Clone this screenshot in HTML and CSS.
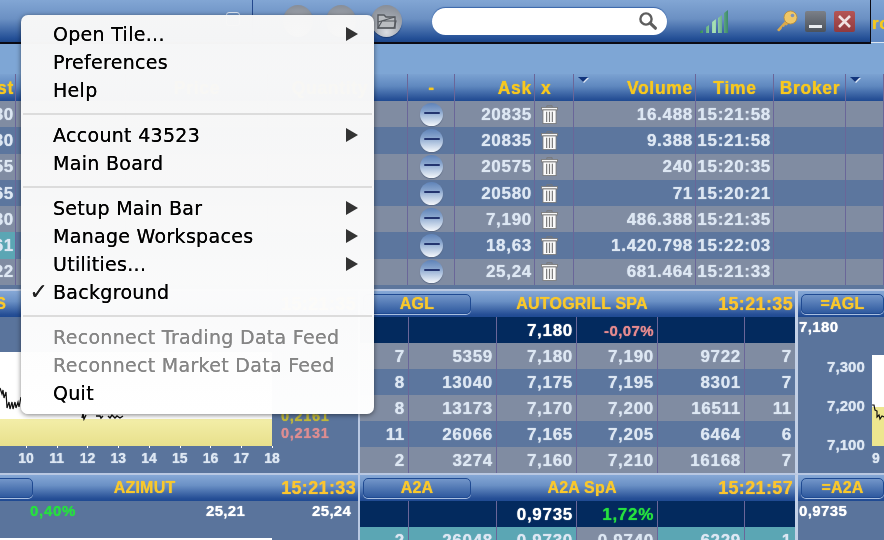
FILE: index.html
```html
<!DOCTYPE html>
<html lang="en">
<head>
<meta charset="utf-8">
<title>Trading board</title>
<link rel="stylesheet" href="styles.css">
</head>
<body>
<div class="app">
  <header class="top">
    <div class="bar">
      <div class="bar-left"><span class="peek"></span></div>
      <div class="bar-right">
        <span class="round"></span>
        <span class="round"></span>
        <span class="round round-last">
          <svg width="22" height="20" viewBox="0 0 22 20"><path d="M2 17V4h6l2 2h9v11z" fill="#b9bcc0" stroke="#55595f" stroke-width="1.4"/><path d="M2 11l17-5M2 17l4-7h14l-2 7z" fill="none" stroke="#55595f" stroke-width="1.2"/></svg>
        </span>
        <div class="search">
          <svg width="20" height="20" viewBox="0 0 20 20"><circle cx="8" cy="8" r="5.6" fill="none" stroke="#5e5e5e" stroke-width="2.4"/><path d="M12.2 12.2l5.2 5" stroke="#5e5e5e" stroke-width="3.2" stroke-linecap="round"/></svg>
        </div>
        <svg class="signal" width="28" height="23" viewBox="0 0 28 23">
          <defs><linearGradient id="sg" x1="0" x2="1" y1="0" y2="0"><stop offset="0" stop-color="#2f8a5a"/><stop offset=".5" stop-color="#a9e2b8"/><stop offset="1" stop-color="#3c8a6a"/></linearGradient></defs>
          <path d="M0 23v-2l3-1v3zM6 23v-6l3-2v8zM12 23V12l4-3v14zM18 23V8l4-3v18zM24 23V3l4-3v23z" fill="url(#sg)"/>
        </svg>
        <svg class="key" width="22" height="23" viewBox="0 0 22 23">
          <path d="M1 20l9-10 3 3-2.500 2.500-1.500-.5-1 2-1.500-.5-1 2.500-2.500 2.500z" fill="#d9a94c"/>
          <circle cx="14.500" cy="7.500" r="6.500" fill="#efc768" stroke="#b98a35" stroke-width=".8"/>
          <circle cx="16.500" cy="5.500" r="1.800" fill="#7f94b8"/>
        </svg>
        <span class="win win-min"><i></i></span>
        <span class="win win-close">
          <svg width="21" height="21" viewBox="0 0 21 21"><path d="M5 5l11 11M16 5L5 16" stroke="#f0e2e2" stroke-width="2.600"/></svg>
        </span>
      </div>
    </div>
    <div class="bar-next"><span>ro</span></div>
  </header>

  <div class="strip"></div>

  <section class="book">
    <div class="tr th">
      <div class="td r clip"><span>st</span></div>
      <div class="td c"></div>
      <div class="td c">Price</div>
      <div class="td c qty">Quantity</div>
      <div class="td c">-</div>
      <div class="td r">Ask</div>
      <div class="td l">x</div>
      <div class="td r sort">Volume</div>
      <div class="td c">Time</div>
      <div class="td c">Broker</div>
      <div class="td sort"></div>
    </div>
    <div class="tr gray">
      <div class="td r clip"><span>30</span></div><div class="td"></div><div class="td"></div><div class="td"></div>
      <div class="td c"><span class="minus"></span></div><div class="td r">20835</div>
      <div class="td l"><svg class="trash" viewBox="0 0 16 18"><use href="#bin"/></svg></div>
      <div class="td r">16.488</div><div class="td r">15:21:58</div><div class="td"></div><div class="td"></div>
    </div>
    <div class="tr blue">
      <div class="td r clip"><span>30</span></div><div class="td"></div><div class="td"></div><div class="td"></div>
      <div class="td c"><span class="minus"></span></div><div class="td r">20835</div>
      <div class="td l"><svg class="trash" viewBox="0 0 16 18"><use href="#bin"/></svg></div>
      <div class="td r">9.388</div><div class="td r">15:21:58</div><div class="td"></div><div class="td"></div>
    </div>
    <div class="tr gray">
      <div class="td r clip"><span>55</span></div><div class="td"></div><div class="td"></div><div class="td"></div>
      <div class="td c"><span class="minus"></span></div><div class="td r">20575</div>
      <div class="td l"><svg class="trash" viewBox="0 0 16 18"><use href="#bin"/></svg></div>
      <div class="td r">240</div><div class="td r">15:20:35</div><div class="td"></div><div class="td"></div>
    </div>
    <div class="tr blue">
      <div class="td r clip"><span>65</span></div><div class="td"></div><div class="td"></div><div class="td"></div>
      <div class="td c"><span class="minus"></span></div><div class="td r">20580</div>
      <div class="td l"><svg class="trash" viewBox="0 0 16 18"><use href="#bin"/></svg></div>
      <div class="td r">71</div><div class="td r">15:20:21</div><div class="td"></div><div class="td"></div>
    </div>
    <div class="tr gray">
      <div class="td r clip"><span>30</span></div><div class="td"></div><div class="td"></div><div class="td"></div>
      <div class="td c"><span class="minus"></span></div><div class="td r">7,190</div>
      <div class="td l"><svg class="trash" viewBox="0 0 16 18"><use href="#bin"/></svg></div>
      <div class="td r">486.388</div><div class="td r">15:21:35</div><div class="td"></div><div class="td"></div>
    </div>
    <div class="tr blue">
      <div class="td r clip teal"><span>61</span></div><div class="td"></div><div class="td"></div><div class="td"></div>
      <div class="td c"><span class="minus"></span></div><div class="td r">18,63</div>
      <div class="td l"><svg class="trash" viewBox="0 0 16 18"><use href="#bin"/></svg></div>
      <div class="td r">1.420.798</div><div class="td r">15:22:03</div><div class="td"></div><div class="td"></div>
    </div>
    <div class="tr gray">
      <div class="td r clip"><span>22</span></div><div class="td"></div><div class="td"></div><div class="td"></div>
      <div class="td c"><span class="minus"></span></div><div class="td r">25,24</div>
      <div class="td l"><svg class="trash" viewBox="0 0 16 18"><use href="#bin"/></svg></div>
      <div class="td r">681.464</div><div class="td r">15:21:33</div><div class="td"></div><div class="td"></div>
    </div>
  </section>

  <section class="boards">
    <!-- row 1 -->
    <article class="panel p-left">
      <div class="head">
        <span class="btn-clip">S</span>
        <span class="title"></span>
        <span class="time">15:21:35</span>
      </div>
      <div class="mini-top"></div>
      <div class="mini-chart">
        <svg class="plot" width="272" height="94" viewBox="0 0 272 94">
          <defs><linearGradient id="fa" x1="0" x2="0" y1="0" y2="1"><stop offset="0" stop-color="#f3eea8"/><stop offset="1" stop-color="#e8e08c"/></linearGradient></defs>
          <rect width="272" height="94" fill="#fff"/>
          <rect y="67" width="272" height="27" fill="url(#fa)"/>
          <path d="M0 36l2 6 1-4 1 8 2-6 1 16 2-6 1 7 2-7 1 7 2-7 1 6 2-6 1 5 2-10" fill="none" stroke="#111" stroke-width="1.200"/>
          <path d="M82 66l1-4 1 5 2-4M96 64h4l1 2 2-2M108 64l2 2 2-3 3 3 2-2 3 2 3-2" fill="none" stroke="#111" stroke-width="1.400"/>
        </svg>
        <div class="levels"><span class="lv-y">0,2161</span><span class="lv-r">0,2131</span></div>
      </div>
      <div class="hours"><span>10</span><span>11</span><span>12</span><span>13</span><span>14</span><span>15</span><span>16</span><span>17</span><span>18</span></div>
    </article>

    <article class="panel p-mid">
      <div class="head">
        <span class="btn">AGL</span>
        <span class="title">AUTOGRILL SPA</span>
        <span class="time">15:21:35</span>
      </div>
      <div class="q dark"><b></b><b></b><b class="w">7,180</b><b class="neg">-0,07%</b><b></b><b></b></div>
      <div class="q gray"><b>7</b><b>5359</b><b>7,180</b><b>7,190</b><b>9722</b><b>7</b></div>
      <div class="q blue"><b>8</b><b>13040</b><b>7,175</b><b>7,195</b><b>8301</b><b>7</b></div>
      <div class="q gray"><b>8</b><b>13173</b><b>7,170</b><b>7,200</b><b>16511</b><b>11</b></div>
      <div class="q blue"><b>11</b><b>26066</b><b>7,165</b><b>7,205</b><b>6464</b><b>6</b></div>
      <div class="q gray"><b>2</b><b>3274</b><b>7,160</b><b>7,210</b><b>16168</b><b>7</b></div>
    </article>

    <article class="panel p-side">
      <div class="head">
        <span class="btn btn-side">=AGL</span>
      </div>
      <div class="last">7,180</div>
      <div class="side-chart">
        <div class="scale"><span>7,300</span><span>7,200</span><span>7,100</span></div>
        <svg class="side-plot" width="12" height="91" viewBox="0 0 12 91">
          <rect width="12" height="91" fill="#fff"/>
          <rect y="52" width="12" height="39" fill="#ede68f"/>
          <path d="M0 50h2l1 5 2 1v6l2-2 1 4 2-3 2 1" fill="none" stroke="#111" stroke-width="1.200"/>
        </svg>
      </div>
      <div class="side-hour">9</div>
    </article>

    <!-- row 2 -->
    <article class="panel p-left">
      <div class="head">
        <span class="btn btn-left"></span>
        <span class="title">AZIMUT</span>
        <span class="time">15:21:33</span>
      </div>
      <div class="quote-line">
        <span class="pos">0,40%</span>
        <span class="val-a">25,21</span>
        <span class="val-b">25,24</span>
      </div>
      <div class="next-plot"></div>
    </article>

    <article class="panel p-mid">
      <div class="head">
        <span class="btn">A2A</span>
        <span class="title">A2A SpA</span>
        <span class="time">15:21:57</span>
      </div>
      <div class="q dark"><b></b><b></b><b class="w">0,9735</b><b class="up">1,72%</b><b></b><b></b></div>
      <div class="q tealrow"><b>2</b><b>26048</b><b>0,9730</b><b class="graycell">0,9740</b><b>6229</b><b>1</b></div>
    </article>

    <article class="panel p-side">
      <div class="head">
        <span class="btn btn-side">=A2A</span>
      </div>
      <div class="last">0,9735</div>
    </article>
  </section>

  <nav class="menu">
    <div class="item"><span></span><span>Open Tile...</span><i class="arrow"></i></div>
    <div class="item"><span></span><span>Preferences</span></div>
    <div class="item"><span></span><span>Help</span></div>
    <hr class="sep">
    <div class="item"><span></span><span>Account 43523</span><i class="arrow"></i></div>
    <div class="item"><span></span><span>Main Board</span></div>
    <hr class="sep">
    <div class="item"><span></span><span>Setup Main Bar</span><i class="arrow"></i></div>
    <div class="item"><span></span><span>Manage Workspaces</span><i class="arrow"></i></div>
    <div class="item"><span></span><span>Utilities...</span><i class="arrow"></i></div>
    <div class="item"><span class="check">✓</span><span>Background</span></div>
    <hr class="sep">
    <div class="item off"><span></span><span>Reconnect Trading Data Feed</span></div>
    <div class="item off"><span></span><span>Reconnect Market Data Feed</span></div>
    <div class="item"><span></span><span>Quit</span></div>
  </nav>
</div>

<svg class="defs" width="0" height="0">
  <symbol id="bin" viewBox="0 0 16 18">
    <path d="M5.500 2.500V.7h5v1.800" fill="none" stroke="#777" stroke-width=".9"/>
    <rect x=".5" y="2.300" width="15" height="2.400" fill="#f6f6f6" stroke="#777" stroke-width=".8"/>
    <rect x="1.800" y="4.700" width="12.400" height="12.900" fill="#fbfbfb" stroke="#777" stroke-width=".8"/>
    <path d="M5.300 6.500v9.500M8 6.500v9.500M10.700 6.500v9.500" stroke="#777" stroke-width="1.100"/>
  </symbol>
</svg>
</body>
</html>
```

FILE: styles.css
```css
* { box-sizing: border-box; }
html, body { margin: 0; padding: 0; }
body { width: 884px; height: 540px; overflow: hidden; background: #7ea6d5; }

.app {
  position: relative;
  width: 884px;
  height: 540px;
  overflow: hidden;
  font: bold 17px/1 "Liberation Sans", Arial, sans-serif;
  letter-spacing: .7px;
  color: #dde7f3;
  text-shadow: 0 0 1px currentColor;
  filter: blur(.35px);
}

/* top bar */
.top { display: flex; height: 44px; }
.bar {
  width: 871px;
  display: flex;
  background: linear-gradient(#82a6d4 0%, #6b90c3 45%, #234f96 92%, #1d4689 100%);
  border-right: 1px solid #0a0a14;
  border-bottom: 2px solid #0a0a14;
}
.bar-left { width: 253px; border-right: 1px solid #23488d; display: flex; justify-content: flex-end; padding: 12px 12px 0 0; }
.peek { width: 14px; height: 14px; border: 1px solid #dbe5f2; border-radius: 3px; }
.bar-right { flex: 1; display: flex; align-items: center; padding-left: 30px; }
.round {
  width: 30px; height: 32px; border-radius: 50%; margin-right: 13px;
  background: radial-gradient(circle at 50% 85%, #dadde2 0, #a4a9b1 45%, #7f858f 100%);
  box-shadow: 0 1px 1px rgba(10, 30, 70, .5);
  display: flex; align-items: center; justify-content: center;
}
.round-last { width: 31px; margin-right: 0; margin-left: 2px; }
.search {
  width: 235px; height: 27px; margin-left: 30px; border-radius: 14px;
  background: #fff; box-shadow: 0 -1px 1px #3a66aa;
  display: flex; align-items: center; justify-content: flex-end; padding-right: 9px;
}
.signal { margin-left: 33px; }
.key { margin-left: 48px; }
.win { width: 21px; height: 21px; margin-left: 7px; border-radius: 2px; display: block; }
.win-min { background: linear-gradient(#7b8088, #4b525c); padding: 14px 4px 0; }
.win-min i { display: block; height: 3px; background: #e9edf2; }
.win-close { background: linear-gradient(#b55555, #8f3a3f); margin-left: 8px; }
.bar-next {
  flex: 1; overflow: hidden; padding: 15px 0 0 1px; color: #f5c81e; font-size: 17px;
  background: linear-gradient(#7ea4d4, #5f88c2);
  border-bottom: 1px solid #dbe5f2; height: 43px;
}

.strip { height: 30px; background: #7ea6d5; }

/* order book */
.book { height: 215px; background: #5d769c; }
.tr { display: grid; grid-template-columns: 16px 110px 142px 140px 47px 80px 39px 122px 78px 72px 38px; height: 26.3px; }
.td {
  border-right: 1.5px solid #6a6699;
  display: flex; align-items: center;
  padding: 0 2px 0 3px;
  white-space: nowrap;
  overflow: hidden;
}
.td.r { justify-content: flex-end; }
.td.c { justify-content: center; }
.td.l { padding-left: 6px; }
.td.clip { padding: 0 1px 0 0; }
.td.clip span { flex: none; }
.teal { background: #5ba6b4; }
.gray { background: #808ca2; }
.blue { background: #5c769e; }
.th {
  height: 27px;
  font-size: 17.500px;
  color: #f7c81f;
  background: linear-gradient(#7ba2d2 0%, #5f88bf 45%, #2a5398 90%, #1f4a92 100%);
}
.th .td { padding-top: 2px; }
.th .qty { padding-right: 18px; }
.sort { position: relative; }
.sort::before {
  content: "";
  position: absolute; left: 4px; top: 3px;
  border-left: 5px solid transparent; border-right: 5px solid transparent;
  border-top: 5px solid #12357c;
  filter: drop-shadow(1px 1px 0 #dfe8f5);
}
.minus {
  width: 23px; height: 23px; border-radius: 50%; position: relative; display: block;
  background: linear-gradient(#5f83b8 0%, #86a3cc 35%, #b9cbe3 65%, #f4f7fb 100%);
  box-shadow: 0 1px 1px #5a6a85;
}
.minus::after {
  content: ""; position: absolute; left: 4px; right: 3px; top: 9px; height: 2px;
  background: #24356f; border-radius: 1px;
}
.trash { width: 17px; height: 19px; display: block; }
.defs { position: absolute; }

/* boards */
.boards { display: grid; grid-template-columns: 360px 438px 1fr; grid-template-rows: 184px 1fr; background: #b9c8e2; padding-top: 2px; height: 251px; }
.panel { background: #5a749c; overflow: hidden; }
.p-left { border-right: 2px solid #b9c8e2; }
.p-mid { border-right: 3px solid #c3d0e6; }
.panel:nth-child(-n+3) { border-bottom: 2px solid #b9c8e2; }
.head {
  height: 26px; display: flex; align-items: center;
  background: linear-gradient(#86a8d6 0%, #6a90c5 40%, #264f96 90%, #1f4a92 100%);
  color: #f9c82c; font-size: 16px; letter-spacing: .2px;
}
.title { flex: 1; text-align: center; padding-right: 25px; }
.time { font-size: 18px; letter-spacing: .35px; padding-right: 2px; color: #fbc52f; }
.btn {
  width: 108px; height: 20px; margin-left: 3px;
  border: 1px solid #1f4a92; border-radius: 5px;
  background: linear-gradient(#7396c9, #2f5a9f);
  box-shadow: 0 1px 0 #a9bfe0;
  display: flex; align-items: center; justify-content: center;
}
.btn-left { width: 60px; margin-left: -27px; }
.btn-clip { width: 6px; display: flex; justify-content: flex-end; overflow: hidden; }
.btn-side { width: 100px; }

.q { display: grid; grid-template-columns: 49px 88px 80px 81px 87px 50px; height: 26px; }
.q b {
  border-right: 1.5px solid #6a6699;
  display: flex; align-items: center; justify-content: flex-end;
  padding-right: 3px; font-weight: bold;
}
.q b:last-child { border-right: 0; }
.dark { background: #032a5e; }
.q .w { color: #fff; }
.q .neg { color: #e58a8e; font-size: 15px; letter-spacing: .4px; }
.q .up { color: #26e03f; }
.tealrow { background: #5ba6b4; }
.q .graycell { background: #808ca2; }

/* left board */
.mini-top { height: 35px; }
.mini-chart { display: flex; height: 94px; }
.plot { display: block; flex: none; }
.levels { flex: 1; display: flex; flex-direction: column; justify-content: flex-end; gap: 2px; padding: 0 0 6px 9px; font-size: 14.500px; }
.lv-y { color: #c2b93a; }
.lv-r { color: #dd8d91; }
.hours { display: flex; padding-left: 10.600px; font-size: 14px; letter-spacing: 0; }
.hours span { width: 30.750px; text-align: center; position: relative; padding-top: 5px; }
.hours span::before {
  content: ""; position: absolute; left: 50%; top: 0; width: 1px; height: 2px; background: #fff;
}
.quote-line { display: flex; height: 37px; padding-top: 2px; font-size: 15px; letter-spacing: .3px; color: #fff; }
.pos { margin-left: 30px; color: #26e03f; letter-spacing: .7px; }
.val-a { margin-left: 130px; }
.val-b { margin-left: 67px; }
.next-plot { height: 4px; width: 272px; background: #fff; }

/* side board */
.last { color: #fff; font-size: 15px; letter-spacing: .4px; height: 38px; padding: 2px 0 0 1px; }
.side-chart { display: flex; align-items: flex-start; height: 91px; }
.scale { flex: none; width: 67px; height: 101px; padding: 4px 0; display: flex; flex-direction: column; justify-content: space-between; align-items: flex-end; font-size: 15px; letter-spacing: .1px; }
.side-plot { margin-left: 7px; flex: none; display: block; }
.side-hour { padding: 5px 0 0 74px; font-size: 14px; }

/* popup menu */
.menu {
  position: absolute; left: 21px; top: 15px; width: 353px; height: 399px;
  padding-top: 5px; border-radius: 7px;
  background: linear-gradient(rgba(247, 247, 247, .985), rgba(250, 250, 250, .985) 55%, rgba(255, 255, 255, .985));
  box-shadow: 0 1px 5px rgba(0, 0, 0, .5);
  font: 400 19px/28px "DejaVu Sans", Verdana, sans-serif;
  letter-spacing: .3px;
  color: #000;
  text-shadow: 0 0 .5px currentColor;
}
.item { display: grid; grid-template-columns: 32px 1fr auto; align-items: center; height: 28px; padding-right: 16px; white-space: nowrap; }
.off { color: #858585; }
.check { text-align: right; padding-right: 5px; color: #222; font-size: 22px; font-weight: bold; letter-spacing: 0; }
.arrow {
  display: block; width: 0; height: 0;
  border-left: 12px solid #333; border-top: 7px solid transparent; border-bottom: 7px solid transparent;
}
.sep { border: 0; height: 2px; background: #dcdcdc; margin: 9px 2px 6px; }
```
